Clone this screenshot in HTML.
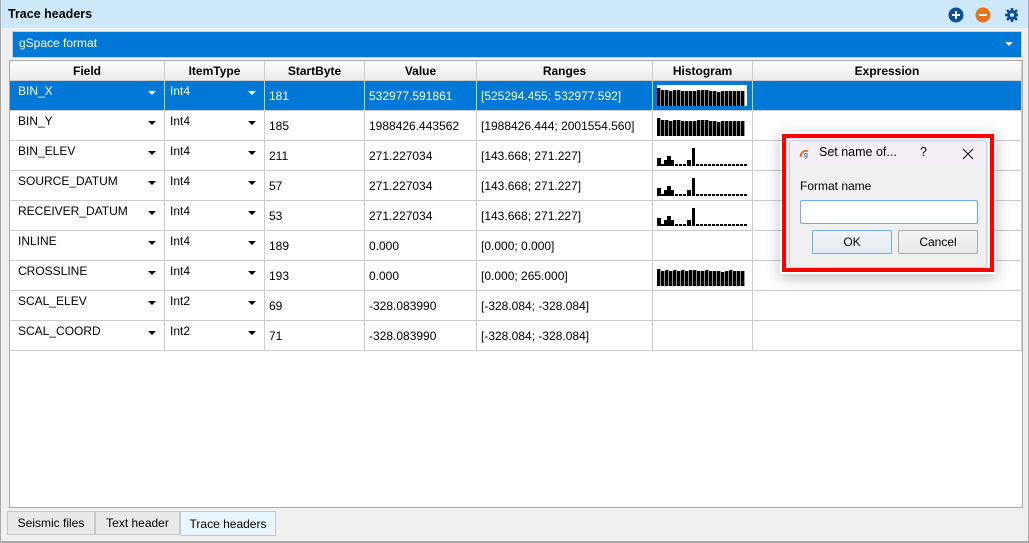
<!DOCTYPE html>
<html><head><meta charset="utf-8"><style>
*{margin:0;padding:0;box-sizing:border-box}
body{width:1029px;height:543px;background:#f0f0f0;font-family:"Segoe UI","Liberation Sans",sans-serif;font-size:12px;color:#000;position:relative;overflow:hidden}
.a{position:absolute}
.title{left:0;top:0;width:1029px;height:28px;background:#cde8f8;border-left:1px solid #aaa;border-right:1px solid #aaa}
.title span{position:absolute;left:7px;top:7px;font-weight:bold;font-size:12.5px}
.combo{left:12px;top:31px;width:1010px;height:27px;background:#0078d7;color:#fff;border:1px solid #ccc}
.grid{left:9px;top:60px;width:1014px;height:448px;background:#fff;border:1px solid #aaa}
.hdr{top:61px;height:20px;background:linear-gradient(#fdfdfd,#ececec);border-right:1px solid #ccc;border-bottom:1px solid #ccc;font-weight:bold;text-align:center;line-height:21px}
.cell{height:30px;border-right:1px solid #ccc;border-bottom:1px solid #ccc;white-space:nowrap}
.sel{background:#0078d7;color:#fff}
.arr{position:absolute;top:10px;width:0;height:0;border-left:4px solid transparent;border-right:4px solid transparent;border-top:4px solid #000}
.sel .arr{border-top-color:#fff}
.tab{top:511px;height:24px;border:1px solid #c8c8c8;background:#e9e9e9;padding:4px 0 0 0;text-align:center}
</style></head><body>
<div class="a title"><span>Trace headers</span></div>
<svg class="a" style="left:948px;top:6px" width="70" height="18">
<circle cx="8" cy="9" r="7.5" fill="#0b4f9b"/><path d="M8 5v8M4 9h8" stroke="#fff" stroke-width="2"/>
<circle cx="35" cy="9" r="7.5" fill="#e8731f"/><path d="M31 9h8" stroke="#fff" stroke-width="2"/>
<g transform="translate(64 9)" fill="#0b4f9b"><circle r="5"/><g stroke="#0b4f9b" stroke-width="2.6"><path d="M0 -7V7M-7 0H7M-5 -5L5 5M-5 5L5 -5"/></g><circle r="2" fill="#cde8f8"/></g>
</svg>
<div class="a" style="left:0;top:28px;width:1px;height:515px;background:#aaa"></div>
<div class="a" style="left:1028px;top:28px;width:1px;height:515px;background:#aaa"></div>
<div class="a" style="left:0;top:541px;width:1029px;height:2px;background:#aaa"></div>
<div class="a combo"><span class="a" style="left:6px;top:4px">gSpace format</span><div class="arr" style="left:992px;border-top-color:#fff"></div></div>
<div class="a grid"></div>
<div id="g"></div>
<div class="a tab" style="left:7px;width:88px">Seismic files</div>
<div class="a tab" style="left:95px;width:85px">Text header</div>
<div class="a tab" style="left:180px;width:96px;background:#eaf6fd;top:511px;height:25px;padding-top:5px">Trace headers</div>
<div class="a" style="left:780px;top:132px;width:216px;height:142px;box-shadow:0 4px 14px rgba(0,0,0,.25)"></div>
<div class="a" style="left:782px;top:134px;width:212px;height:138px;border:4px solid #f00;background:#f0f0f0">
 <div class="a" style="left:3px;top:2px;width:198px;height:128px;border:1px solid #ccc;border-radius:4px;overflow:hidden;background:#f0f0f0">
  <div class="a" style="left:0;top:0;width:198px;height:27px;background:#f4eff6"></div>
  <svg class="a" style="left:9px;top:7px" width="14" height="12"><path d="M2 9C1 5 5 2 9 3" stroke="#e8731f" stroke-width="2" fill="none"/><text x="5" y="9" font-size="7" fill="#0b4f9b" font-family="Liberation Sans">g</text></svg>
  <span class="a" style="left:29px;top:4px;font-size:12.5px">Set name of...</span>
  <span class="a" style="left:130px;top:4px;font-size:12.5px">?</span>
  <svg class="a" style="left:172px;top:7px" width="12" height="12"><path d="M1 1L11 11M11 1L1 11" stroke="#222" stroke-width="1.2"/></svg>
  <span class="a" style="left:10px;top:38px">Format name</span>
  <div class="a" style="left:10px;top:59px;width:178px;height:24px;background:#fff;border:1px solid #6aaee8;border-radius:2px"></div>
  <div class="a" style="left:22px;top:89px;width:80px;height:24px;border:1px solid #6aaee8;background:linear-gradient(#f2f5f9,#e4eaf1);border-radius:2px;text-align:center;line-height:22px">OK</div>
  <div class="a" style="left:108px;top:89px;width:80px;height:24px;border:1px solid #aaa;background:linear-gradient(#f6f6f6,#e8e8e8);border-radius:2px;text-align:center;line-height:22px">Cancel</div>
 </div>
</div>
<script>
var cols=[10,165,265,365,477,653,753,1022];
var names=["Field","ItemType","StartByte","Value","Ranges","Histogram","Expression"];
var rows=[["BIN_X","Int4","181","532977.591861","[525294.455; 532977.592]","F"],
["BIN_Y","Int4","185","1988426.443562","[1988426.444; 2001554.560]","F"],
["BIN_ELEV","Int4","211","271.227034","[143.668; 271.227]","S"],
["SOURCE_DATUM","Int4","57","271.227034","[143.668; 271.227]","S"],
["RECEIVER_DATUM","Int4","53","271.227034","[143.668; 271.227]","S"],
["INLINE","Int4","189","0.000","[0.000; 0.000]",""],
["CROSSLINE","Int4","193","0.000","[0.000; 265.000]","C"],
["SCAL_ELEV","Int2","69","-328.083990","[-328.084; -328.084]",""],
["SCAL_COORD","Int2","71","-328.083990","[-328.084; -328.084]",""]];
function hist(t,sel){
 var s='<svg width="90" height="22" style="position:absolute;left:4px;top:4px">';
 if(sel)s+='<rect width="90" height="21" fill="#fff"/>';
 if(t=="F"||t=="C"){var hs=t=="F"?[18,16,16,15,16,16,15,15,15,15,16,16,16,15,15,14,15,15,15,15,15,15]:[17,15,16,15,16,15,16,15,16,16,15,15,16,15,15,15,14,15,16,15,15,15];
  for(var i=0;i<22;i++)s+='<rect x="'+(i*4)+'" y="'+(21-hs[i])+'" width="3.4" height="'+hs[i]+'"/>';}
 if(t=="S"){var b=[[0,4,8],[4,3,2],[7,3,6],[10,4,10],[14,3,6],[18,3,2],[22,3,2],[26,3,2],[30,4,6],[35,3,18]];
  b.forEach(function(r){s+='<rect x="'+r[0]+'" y="'+(21-r[2])+'" width="'+r[1]+'" height="'+r[2]+'"/>'});
  for(var x=39;x<90;x+=4)s+='<rect x="'+x+'" y="19" width="3" height="2"/>';}
 return s+'</svg>';
}
var h='';
for(var c=0;c<7;c++)h+='<div class="a hdr" style="left:'+cols[c]+'px;width:'+(cols[c+1]-cols[c])+'px">'+names[c]+'</div>';
rows.forEach(function(r,i){var y=81+i*30,sel=i==0;
 for(var c=0;c<7;c++){var w=cols[c+1]-cols[c];var cls='a cell'+(sel?' sel':'');var inner='';
  if(c<2){inner='<span class="a" style="left:'+(c==0?8:5)+'px;top:3px">'+r[c]+'</span><div class="arr" style="left:'+(w-17)+'px"></div>';}
  else if(c<5){inner='<span class="a" style="left:4px;top:8px">'+r[c]+'</span>';}
  else if(c==5&&r[5]){inner=hist(r[5],sel);}
  h+='<div class="'+cls+'" style="left:'+cols[c]+'px;top:'+y+'px;width:'+w+'px">'+inner+'</div>';}
});
document.getElementById('g').innerHTML=h;
</script>
</body></html>
